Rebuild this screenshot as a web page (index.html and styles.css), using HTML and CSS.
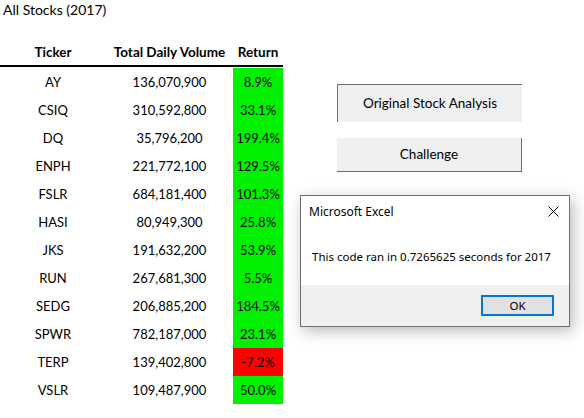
FILE: index.html
```html
<!DOCTYPE html>
<html>
<head>
<meta charset="utf-8">
<link rel="stylesheet" href="styles.css">
</head>
<body>
<div class="sheet">
  <div class="left">
    <div class="title">All Stocks (2017)</div>
    <div class="grid">
      <div class="hd">Ticker</div><div class="hd">Total Daily Volume</div><div class="hd">Return</div>
      <div class="c">AY</div><div class="c">136,070,900</div><div class="c pos">8.9%</div>
      <div class="c">CSIQ</div><div class="c">310,592,800</div><div class="c pos">33.1%</div>
      <div class="c">DQ</div><div class="c">35,796,200</div><div class="c pos">199.4%</div>
      <div class="c">ENPH</div><div class="c">221,772,100</div><div class="c pos">129.5%</div>
      <div class="c">FSLR</div><div class="c">684,181,400</div><div class="c pos">101.3%</div>
      <div class="c">HASI</div><div class="c">80,949,300</div><div class="c pos">25.8%</div>
      <div class="c">JKS</div><div class="c">191,632,200</div><div class="c pos">53.9%</div>
      <div class="c">RUN</div><div class="c">267,681,300</div><div class="c pos">5.5%</div>
      <div class="c">SEDG</div><div class="c">206,885,200</div><div class="c pos">184.5%</div>
      <div class="c">SPWR</div><div class="c">782,187,000</div><div class="c pos">23.1%</div>
      <div class="c">TERP</div><div class="c">139,402,800</div><div class="c neg">-7.2%</div>
      <div class="c">VSLR</div><div class="c">109,487,900</div><div class="c pos">50.0%</div>
    </div>
  </div>
  <div class="right">
    <div class="btn pressed">Original Stock Analysis</div>
    <div class="btn raised">Challenge</div>
  </div>
</div>
<div class="dialog">
  <div class="dlg-body">
    <div class="dlg-title">
      <span>Microsoft Excel</span>
      <svg class="close" width="11" height="11" viewBox="0 0 11 11"><path d="M0.5 0.5 L10.5 10.5 M10.5 0.5 L0.5 10.5" stroke="#000" stroke-width="1" fill="none"/></svg>
    </div>
    <div class="dlg-msg">This code ran in 0.7265625 seconds for 2017</div>
  </div>
  <div class="dlg-foot">
    <div class="ok">OK</div>
  </div>
</div>
</body>
</html>
```
FILE: styles.css
```css
html, body {
  margin: 0;
  padding: 0;
  background: #fff;
}
body {
  width: 584px;
  height: 418px;
  overflow: hidden;
  position: relative;
  font-family: Lato, "Open Sans", sans-serif;
  font-size: 13px;
  color: #000;
}
.sheet {
  display: flex;
}
.left {
  width: 283px;
}
.title {
  height: 20px;
  line-height: 20px;
  padding-left: 3px;
  font-size: 14px;
  margin-bottom: 20px;
}
.grid {
  display: grid;
  grid-template-columns: 106px 127px 50px;
  grid-auto-rows: 28px;
}
.hd {
  height: 25px;
  line-height: 25px;
  text-align: center;
  font-weight: bold;
  border-bottom: 2px solid #000;
  font-size: 13.5px;
}
.c {
  line-height: 28px;
  text-align: center;
}
.pos { background: #00f000; }
.neg { background: #ff0000; }
.right {
  margin-left: 54px;
  padding-top: 84px;
  display: flex;
  flex-direction: column;
  gap: 16px;
}
.btn {
  width: 185px;
  box-sizing: border-box;
  background: #f0f0f0;
  text-align: center;
  font-size: 13.5px;
}
.pressed {
  height: 38px;
  line-height: 37px;
  border-top: 1px solid #6e6e6e;
  border-left: 1px solid #6e6e6e;
}
.raised {
  height: 34px;
  line-height: 33px;
  border-right: 1px solid #6e6e6e;
  border-bottom: 1px solid #6e6e6e;
}
.dialog {
  position: absolute;
  left: 300px;
  top: 195px;
  width: 270px;
  height: 132px;
  box-sizing: border-box;
  border: 1px solid #6f6f6f;
  background: #fff;
  box-shadow: 3px 4px 14px rgba(0,0,0,0.28);
  font-family: "Noto Sans", "Open Sans", sans-serif;
  font-size: 11.5px;
  display: flex;
  flex-direction: column;
}
.dlg-body {
  height: 89px;
  background: #fff;
}
.dlg-title {
  display: flex;
  justify-content: space-between;
  align-items: center;
  height: 30px;
  padding: 0 10px 0 8px;
  font-size: 12px;
}
.close {
  display: block;
}
.dlg-msg {
  padding-left: 11px;
  padding-top: 23px;
  line-height: 16px;
}
.dlg-foot {
  flex: 1;
  background: #f0f0f0;
  display: flex;
  justify-content: flex-end;
  align-items: flex-start;
  padding: 10px 15px 0 0;
}
.ok {
  width: 73px;
  height: 21px;
  box-sizing: border-box;
  border: 2px solid #0078d7;
  background: #e1e1e1;
  text-align: center;
  line-height: 17px;
}
```
